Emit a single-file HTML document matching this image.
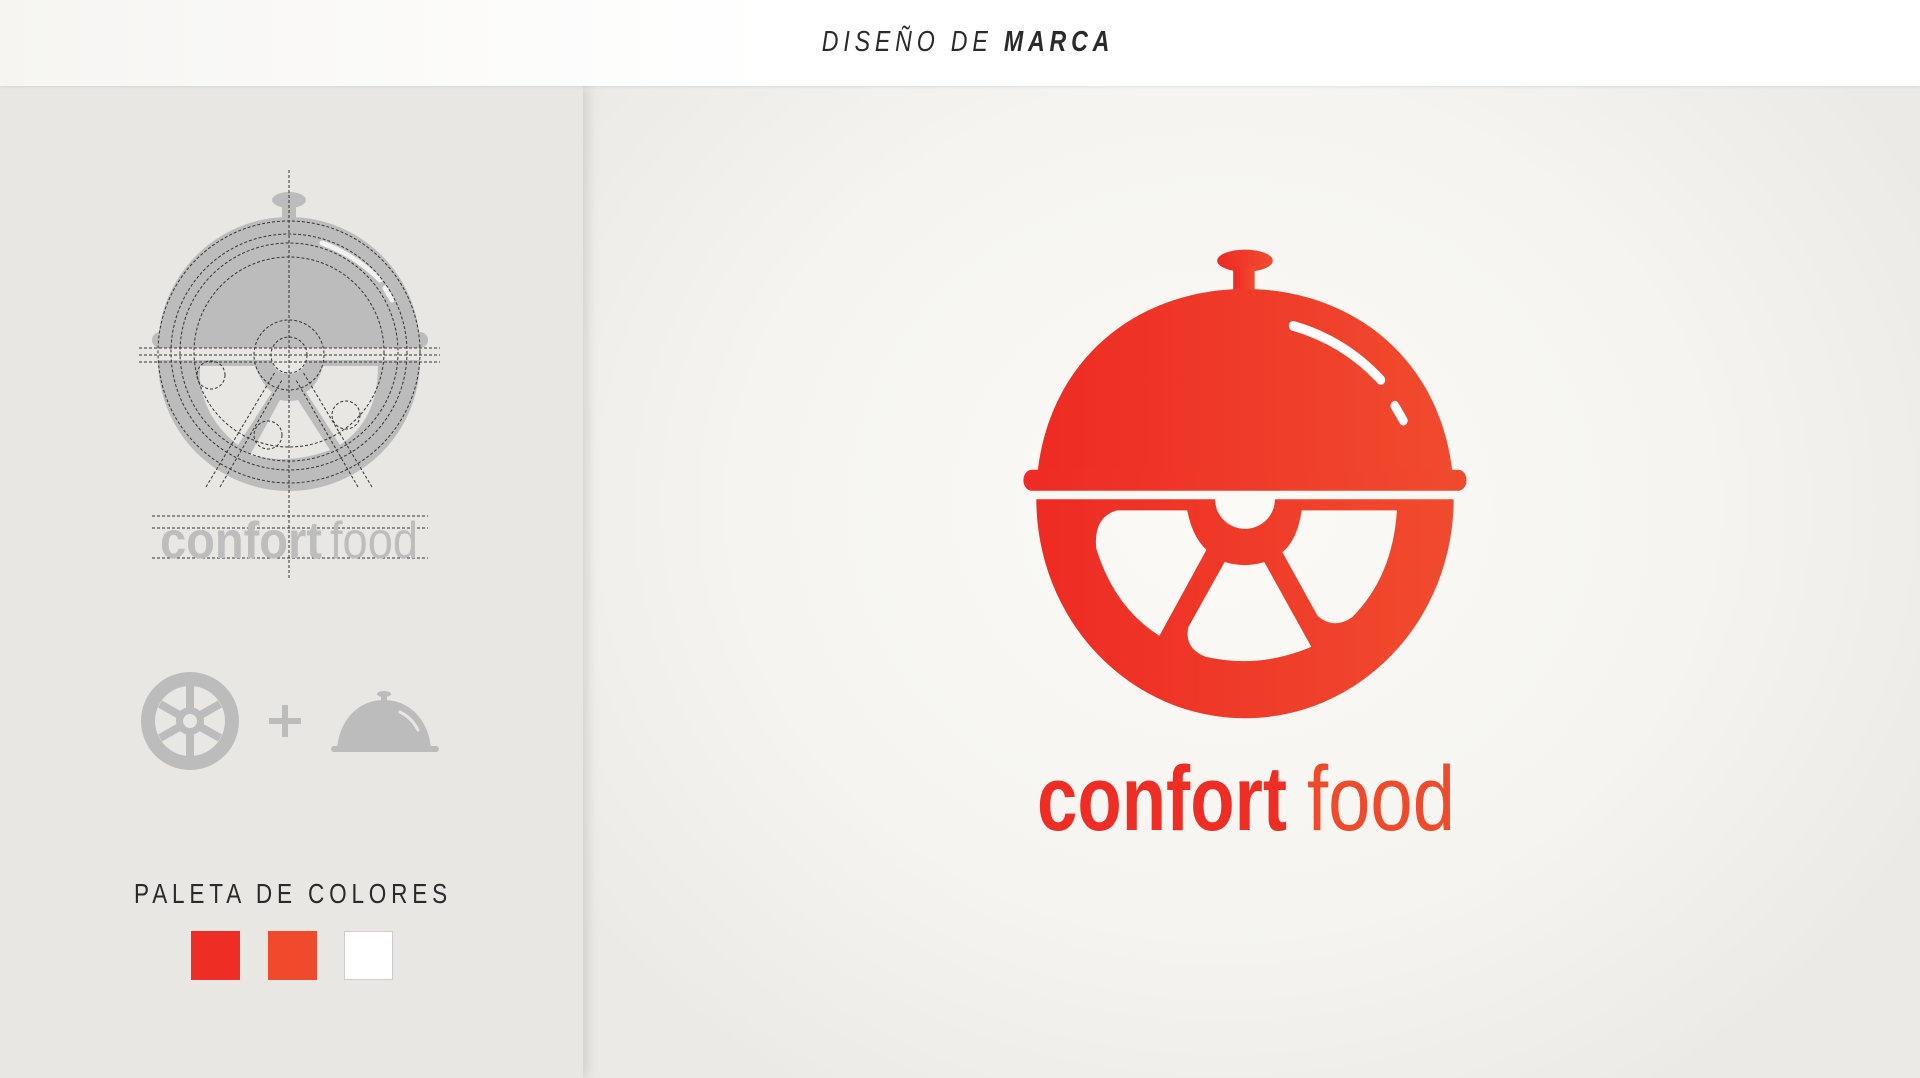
<!DOCTYPE html>
<html><head><meta charset="utf-8"><style>
html,body{margin:0;padding:0}
body{width:1920px;height:1078px;overflow:hidden;position:relative;background:#f3f2ee;font-family:"Liberation Sans",sans-serif}
.hdr{position:absolute;left:0;top:0;width:1920px;height:86px;background:linear-gradient(90deg,#f6f5f2,#fff 40%,#fff);box-shadow:0 1px 3px rgba(0,0,0,.08);z-index:3}
.hdr div{position:absolute;left:8px;width:1920px;top:26px;text-align:center;font-size:29px;font-style:italic;letter-spacing:6px;color:#2a2a2a;transform:scaleX(.8)}
.main{position:absolute;left:583px;top:86px;width:1337px;height:992px;background:radial-gradient(ellipse 800px 700px at 640px 420px,#fbfaf7 0%,#f5f4f0 60%,#eceae6 100%)}
.left{position:absolute;left:0;top:86px;width:583px;height:992px;background:#e8e7e4;box-shadow:4px 0 12px rgba(0,0,0,.12);z-index:2}
svg{position:absolute;left:0;top:0}
</style></head><body>
<div class="main"></div>
<div class="left"></div>
<div class="hdr"><div>DISEÑO DE <b>MARCA</b></div></div>
<svg width="1920" height="1078" style="z-index:4">
<defs><linearGradient id="g" x1="0" x2="1"><stop offset="0" stop-color="#ee2b24"/><stop offset="1" stop-color="#f04b2e"/></linearGradient></defs>
<g transform="translate(-67.9,-50.5) scale(1.07,1.23)">
<g fill="url(#g)">
<ellipse cx="1227" cy="253" rx="26" ry="9"/>
<rect x="1216" y="258" width="20" height="20"/>
<path d="M1033,426 C1045,330 1130,276 1227,276 C1324,276 1409,330 1421,426 Z"/>
<rect x="1020" y="423" width="414" height="17" rx="8"/>
<path fill-rule="evenodd" d="M1032,447 H1199 A28,24 0 0 0 1255,447 H1422 A195,178 0 0 1 1032,447 Z
M1107,456 H1173 Q1178,478 1191,488 L1147,558 Q1105,535 1088,487 Q1085,462 1107,456 Z
M1208,498 Q1227,503 1245,498 L1289,567 Q1240,585 1190,575 Q1170,568 1174,551 Z
M1280,456 H1369 Q1365,510 1327,543 Q1310,553 1295,542 L1262,490 Q1276,480 1280,456 Z"/>
</g>
<path d="M1272,306 Q1320,318 1354,350" stroke="#fff" stroke-width="8" fill="none" stroke-linecap="round"/>
<path d="M1367,371 L1375,383" stroke="#fff" stroke-width="8" fill="none" stroke-linecap="round"/>
</g>
<text x="1037" y="830" font-size="92" font-weight="bold" fill="#ee2e24" textLength="250" lengthAdjust="spacingAndGlyphs">confort</text>
<text x="1307" y="830" font-size="92" fill="#f04a2c" textLength="148" lengthAdjust="spacingAndGlyphs">food</text>

<!-- gray construction logo -->
<g fill="#bcbcbc">
<ellipse cx="289" cy="200" rx="17" ry="8"/>
<rect x="282" y="200" width="14" height="20"/>
<path d="M158,348 A131,131 0 0 1 420,348 Z"/>
<ellipse cx="160" cy="340" rx="8" ry="8"/><ellipse cx="420" cy="340" rx="8" ry="8"/>
<path fill-rule="evenodd" d="M158,360 H272 A17,14 0 0 0 306,360 H420 A131,131 0 0 1 158,360 Z
M200,366 H255 Q262,385 272,392 L238,445 Q205,420 200,380 Z
M280,400 Q289,402 298,400 L330,450 Q290,465 250,455 Z
M323,366 H378 Q378,420 340,445 L306,392 Q318,385 323,366 Z"/>
</g>
<path d="M322,243 Q355,255 380,280 M385,288 L392,300" stroke="#f2f2f0" stroke-width="5" fill="none" stroke-linecap="round"/>
<g fill="none" stroke="#333" stroke-width="1" stroke-dasharray="3,2">
<line x1="289" y1="170" x2="289" y2="580"/>
<line x1="139" y1="348" x2="440" y2="348"/><line x1="139" y1="355" x2="440" y2="355"/><line x1="139" y1="362" x2="440" y2="362"/>
<circle cx="289" cy="352" r="131"/><circle cx="289" cy="352" r="118"/><circle cx="289" cy="352" r="109"/><circle cx="289" cy="352" r="95"/>
<circle cx="289" cy="355" r="35"/><circle cx="289" cy="355" r="18"/>
<circle cx="211" cy="375" r="14"/><circle cx="268" cy="435" r="14"/><circle cx="346" cy="415" r="14"/>
<line x1="206" y1="487" x2="275" y2="372"/><line x1="220" y1="487" x2="282" y2="380"/>
<line x1="372" y1="487" x2="303" y2="372"/><line x1="358" y1="487" x2="296" y2="380"/>
<line x1="152" y1="516" x2="428" y2="516"/><line x1="152" y1="528" x2="428" y2="528"/><line x1="152" y1="558" x2="428" y2="558"/>
</g>
<text x="160" y="558" font-size="52" font-weight="bold" fill="#bdbdbd" textLength="162" lengthAdjust="spacingAndGlyphs">confort</text>
<text x="330" y="558" font-size="52" fill="#bdbdbd" textLength="88" lengthAdjust="spacingAndGlyphs">food</text>

<!-- icons row -->
<circle cx="190" cy="721" r="49" fill="#bcbcbc"/>
<circle cx="190" cy="721" r="35" fill="#e8e7e4"/>
<g stroke="#bcbcbc" stroke-width="8"><line x1="190" y1="721" x2="190" y2="686"/><line x1="190" y1="721" x2="160" y2="738"/><line x1="190" y1="721" x2="220" y2="738"/><line x1="190" y1="721" x2="160" y2="704"/><line x1="190" y1="721" x2="220" y2="704"/><line x1="190" y1="721" x2="190" y2="756"/></g>
<circle cx="190" cy="721" r="14" fill="#bcbcbc"/><circle cx="190" cy="721" r="7" fill="#e8e7e4"/>
<path d="M285,705 V737 M269,721 H301" stroke="#bcbcbc" stroke-width="6"/>
<g fill="#bcbcbc">
<ellipse cx="384" cy="694" rx="7" ry="3"/><rect x="381" y="694" width="6" height="7"/>
<path d="M337,748 C340,718 360,700 384,700 C408,700 428,718 431,748 Z"/>
<rect x="331" y="746" width="108" height="6" rx="3"/>
</g>
<path d="M400,712 Q412,718 418,730" stroke="#e8e7e4" stroke-width="3" fill="none" stroke-linecap="round"/>

<text x="293" y="903" font-size="28" fill="#2a2a2a" text-anchor="middle" letter-spacing="6" style="font-weight:300" textLength="318" lengthAdjust="spacingAndGlyphs">PALETA DE COLORES</text>
<rect x="191" y="931" width="49" height="49" fill="#ee2e24"/>
<rect x="268" y="931" width="49" height="49" fill="#f04a2c"/>
<rect x="344.5" y="931.5" width="48" height="48" fill="#fff" stroke="#ccc"/>
</svg>
</body></html>
